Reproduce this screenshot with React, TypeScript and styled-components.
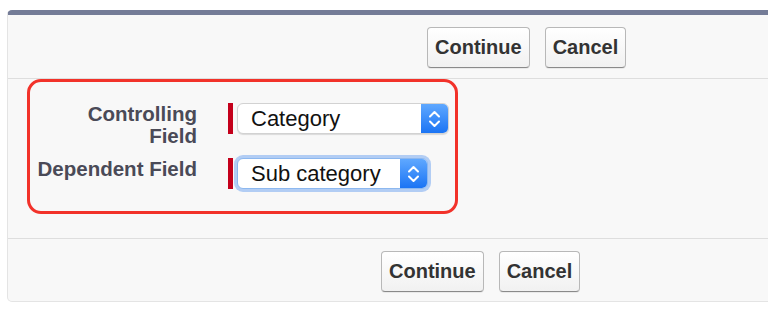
import React from 'react';
import styled, {createGlobalStyle} from 'styled-components';

const GlobalStyle = createGlobalStyle`
  html, body {
    margin: 0;
    padding: 0;
    background: #ffffff;
    overflow: hidden;
  }
  body {
    font-family: "Liberation Sans", Arial, sans-serif;
  }
`;

const Page = styled.div`
  width: 768px;
  height: 317px;
  padding: 10px 0 0 7px;
  box-sizing: border-box;
  overflow: hidden;
`;

const Panel = styled.div`
  width: 800px;
  background: #f8f8f8;
  border: 1px solid #e4e4e4;
  border-top: 5px solid #747c97;
  border-radius: 5px;
  box-sizing: border-box;
`;

const ButtonRow = styled.div<{ $offset: number; $bottom?: boolean }>`
  display: flex;
  gap: 15px;
  padding: ${p => (p.$bottom ? '12px 0 9px' : '12px 0 10px')};
  padding-left: ${p => p.$offset}px;
  border-bottom: ${p => (p.$bottom ? 'none' : '1px solid #dedede')};
`;

const Button = styled.button`
  height: 41px;
  padding: 0 7px;
  font-family: "Liberation Sans", Arial, sans-serif;
  font-size: 20px;
  font-weight: bold;
  color: #333333;
  background: linear-gradient(#ffffff, #f1f1f1);
  border: 1px solid #b8b8b8;
  border-bottom-color: #8a8a8a;
  border-radius: 4px;
  box-shadow: 0 1px 0 rgba(0, 0, 0, 0.06);
`;

const FormSection = styled.div`
  padding: 0 0 24px 19px;
  border-bottom: 1px solid #dedede;
`;

const Highlight = styled.div`
  width: 431px;
  height: 135px;
  box-sizing: border-box;
  border: 3px solid #f2322a;
  border-radius: 14px;
  padding: 21px 0 0 0;
  display: grid;
  grid-template-columns: 167px auto;
  column-gap: 31px;
  row-gap: 11px;
  align-items: start;
  align-content: start;
`;

const Label = styled.label`
  text-align: right;
  font-size: 20.5px;
  line-height: 22px;
  font-weight: bold;
  color: #4a4a57;
`;

const Field = styled.div`
  display: flex;
  gap: 4px;
  align-items: center;
`;

const Required = styled.span`
  width: 5px;
  height: 31px;
  background: #c4001b;
`;

const Select = styled.div<{ $width: number; $focus?: boolean }>`
  width: ${p => p.$width}px;
  height: 31px;
  box-sizing: border-box;
  display: flex;
  align-items: stretch;
  background: #ffffff;
  border: 1px solid ${p => (p.$focus ? '#8db8ef' : '#d2d2d2')};
  border-radius: 6px;
  box-shadow: ${p => (p.$focus ? '0 0 0 3px rgba(120, 170, 240, 0.55)' : '0 1px 1px rgba(0, 0, 0, 0.12)')};
  overflow: hidden;
`;

const SelectText = styled.span`
  flex: 1;
  padding-left: 13px;
  font-size: 22px;
  line-height: 29px;
  color: #111111;
`;

const Stepper = styled.span`
  width: 27px;
  display: flex;
  align-items: center;
  justify-content: center;
  background: linear-gradient(#5fa8ff, #1b74f4);
`;

const Chevrons = () => (
  <svg width="13" height="20" viewBox="0 0 13 20" fill="none">
    <path d="M2 7.5 L6.5 3 L11 7.5" stroke="#ffffff" strokeWidth="2" strokeLinecap="round" strokeLinejoin="round"/>
    <path d="M2 12.5 L6.5 17 L11 12.5" stroke="#ffffff" strokeWidth="2" strokeLinecap="round" strokeLinejoin="round"/>
  </svg>
);

const App: React.FC = () => {
  return (
    <Page>
      <GlobalStyle/>
      <Panel>
        <ButtonRow $offset={419}>
          <Button>Continue</Button>
          <Button>Cancel</Button>
        </ButtonRow>
        <FormSection>
          <Highlight>
            <Label>Controlling<br/>Field</Label>
            <Field>
              <Required/>
              <Select $width={212}>
                <SelectText>Category</SelectText>
                <Stepper><Chevrons/></Stepper>
              </Select>
            </Field>
            <Label>Dependent Field</Label>
            <Field>
              <Required/>
              <Select $width={191} $focus>
                <SelectText>Sub category</SelectText>
                <Stepper><Chevrons/></Stepper>
              </Select>
            </Field>
          </Highlight>
        </FormSection>
        <ButtonRow $offset={373} $bottom>
          <Button>Continue</Button>
          <Button>Cancel</Button>
        </ButtonRow>
      </Panel>
    </Page>
  );
};

export default App;
